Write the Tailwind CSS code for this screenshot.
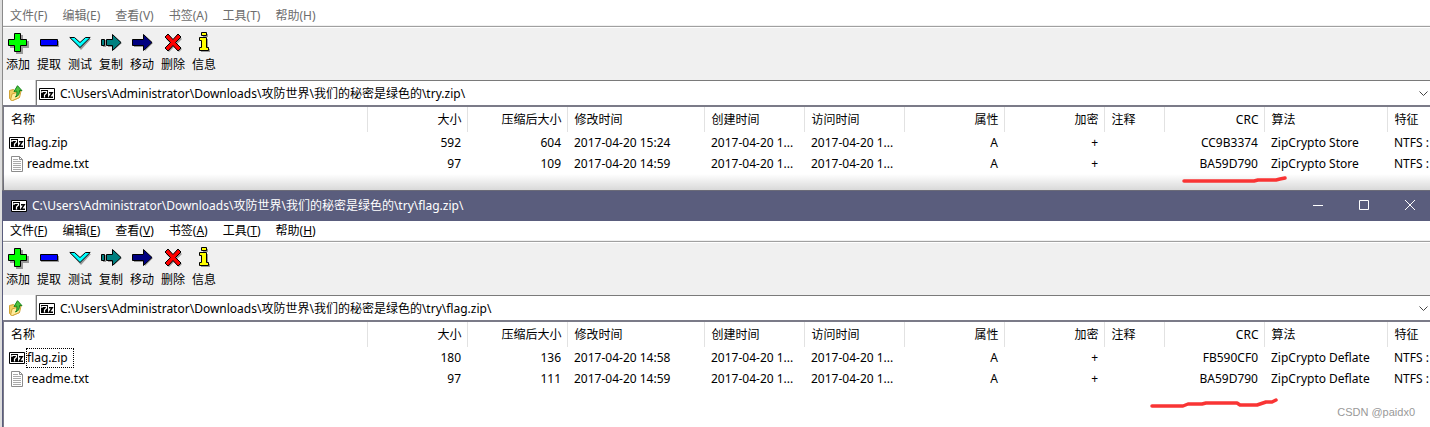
<!DOCTYPE html>
<html lang="zh-CN">
<head>
    <meta charset="UTF-8">
    <meta name="viewport" content="width=device-width, initial-scale=1.0">
    <title>7-Zip</title>
    <script src="https://cdn.jsdelivr.net/npm/@tailwindcss/browser@4"></script>
</head>
<body class="relative min-h-screen overflow-hidden bg-[#dedede] pl-[2px] font-['Noto_Sans','Noto_Sans_CJK_SC',sans-serif] text-[12px] leading-[18px] text-black">
    <!-- Shared icons -->
    <svg class="hidden">
        <symbol id="i-add" viewBox="0 0 22 22"><path fill="#999" d="M9 3h7v6h6v7h-6v6H9v-6H3V9h6z"/><path fill="#0f0" stroke="#000" d="M7.500 1.500h6v6h6v6h-6v6h-6v-6h-6v-6h6z"/></symbol>
        <symbol id="i-extract" viewBox="0 0 22 22"><path fill="#999" d="M3 9h18v6H3z"/><path fill="#00f" stroke="#000" d="M2.500 7.500h17v6h-17z"/></symbol>
        <symbol id="i-test" viewBox="0 0 22 22"><path fill="#999" d="M2 7h5l5 5 5-5h5L12 18z"/><path fill="#0ff" stroke="#000" d="M.800 5.500h4.700L11 10.500l5.500-5h4.700L11 15.500z"/></symbol>
        <symbol id="i-copy" viewBox="0 0 22 22"><path fill="#999" d="M3 8h3v7H3zM8 8h6V4l8 7-8 7v-3H8z"/><path fill="#008080" stroke="#000" d="M1.500 7.500h3v6h-3zM6.500 7.500h6v-5l8.500 8-8.500 8v-5h-6z"/></symbol>
        <symbol id="i-move" viewBox="0 0 22 22"><path fill="#999" d="M3 8h11V4l8 7-8 8v-4H3z"/><path fill="#000080" stroke="#000" d="M1.500 7.500h11v-5l8.500 8-8.500 8v-5h-11z"/></symbol>
        <symbol id="i-delete" viewBox="0 0 22 22"><path fill="#999" d="M7 4l5 5 5-5 3 3-5 5 5 5-3 3-5-5-5 5-3-3 5-5-5-5z"/><path fill="#f00" stroke="#000" d="M6 2l5 5.500L16 2l3 3-5.500 5.500L19 16l-3 3-5-5.500L6 19l-3-3 5.500-5.500L3 5z"/></symbol>
        <symbol id="i-info" viewBox="0 0 22 22"><path fill="#999" d="M10 2h5v3h-5zM8 7h7v10h2v3H8v-3h2v-7H8z"/><path fill="#ff0" stroke="#000" d="M8.500.500h5v3h-5zM6.500 5.500h7v10h2v3h-9v-3h2v-7h-2z"/></symbol>
        <symbol id="i-7z" viewBox="0 0 16 12"><path fill="#fff" stroke="#000" d="M.500.500h15v11H.500z"/><path d="M2 2h7v8H2z"/><path fill="none" stroke="#fff" stroke-width="1.200" d="M3 5V3.500h4.500V5L5.500 7v2.500"/><path fill="none" stroke="#000" stroke-width="1.500" d="M10 4.700h3.200L10.300 9.200H14"/></symbol>
        <symbol id="i-up" viewBox="0 0 16 16"><path fill="#f0cf62" stroke="#d1a437" d="M1.500 5.500l4-1 1 1 5-1v8l-7 3-3-2z"/><path fill="#ffeb9c" stroke="#d1a437" d="M2.500 15l1.500-6 9-3-1.500 6.500-7 3z"/><path fill="#4cc43f" stroke="#16801a" d="M9.500.700l4.500 5-2.500-.200c0 3.500-1 5.500-4 6.500 1.500-2 1.700-3.500 1.200-6L6 6.500z"/></symbol>
        <symbol id="i-txt" viewBox="0 0 12 16"><path fill="#fff" stroke="#8c8c8c" d="M.500.500h8l3 3v12H.500z"/><path fill="none" stroke="#8c8c8c" d="M8.500.500v3h3"/><path stroke="#aaa" d="M2 3.500h5M2 5.500h8M2 7.500h8M2 9.500h8M2 11.500h8M2 13.500h8"/></symbol>
        <symbol id="i-down" viewBox="0 0 9 6"><path fill="none" stroke="#444" d="M.500.500l4 4 4-4"/></symbol>
    </svg>

    <!-- Back window -->
    <section class="relative h-[190px] overflow-hidden border-l border-[#8a8a8a] bg-white pt-[6px]">
        <nav class="flex h-[20px] gap-[15px] border-b border-[#f0f0f0] pl-[7px] text-[#6d6d6d]">
            <button>文件(F)</button><button>编辑(E)</button><button>查看(V)</button><button>书签(A)</button><button>工具(T)</button><button>帮助(H)</button>
        </nav>
        <div class="flex h-[54px] border-t border-[#a0a0a0] bg-[#f0f0f0] pt-[5px] shadow-[inset_0_1px_0_#fff] [&>button]:-ml-px [&>button]:flex [&>button]:w-[32px] [&>button]:flex-col [&>button]:items-center [&>button]:gap-[2px]">
            <button><svg class="size-[22px]"><use href="#i-add"/></svg>添加</button>
            <button><svg class="size-[22px]"><use href="#i-extract"/></svg>提取</button>
            <button><svg class="size-[22px]"><use href="#i-test"/></svg>测试</button>
            <button><svg class="size-[22px]"><use href="#i-copy"/></svg>复制</button>
            <button><svg class="size-[22px]"><use href="#i-move"/></svg>移动</button>
            <button><svg class="size-[22px]"><use href="#i-delete"/></svg>删除</button>
            <button><svg class="size-[22px]"><use href="#i-info"/></svg>信息</button>
        </div>
        <div class="flex h-[27px] border-b-2 border-[#7b7b88]">
            <button class="w-[33px] pl-[5px]" aria-label="上一级"><svg class="size-[16px]"><use href="#i-up"/></svg></button>
            <div class="relative flex min-w-0 flex-1 items-center border-t border-l border-[#7a7a7a] pt-px pl-[2px] shadow-[-1px_0_0_#d0d0d0]">
                <svg class="h-[12px] w-[16px]"><use href="#i-7z"/></svg>
                <select aria-label="路径" class="min-w-0 flex-1 appearance-none pl-[5px] outline-none">
                    <option>C:\Users\Administrator\Downloads\攻防世界\我们的秘密是绿色的\try.zip\</option>
                </select>
                <svg class="pointer-events-none absolute right-[2px] h-[6px] w-[9px]"><use href="#i-down"/></svg>
            </div>
        </div>
        <div class="h-[83px] border-l border-[#7b7b88]">
            <table class="w-full table-fixed text-right whitespace-nowrap [&_td]:overflow-hidden [&_td]:py-0 [&_td]:pr-[6px] [&_td]:pl-[7px] [&_th]:overflow-hidden [&_th]:border-r [&_th]:border-[#e2e2e2] [&_th]:pr-[5px] [&_th]:pl-[7px] [&_th]:font-normal [&_th:last-child]:border-r-0 [&_th:last-child]:pr-0 [&_td:last-child]:pr-0">
                <colgroup><col class="w-[363px]"><col class="w-[100px]"><col class="w-[100px]"><col class="w-[137px]"><col class="w-[100px]"><col class="w-[100px]"><col class="w-[100px]"><col class="w-[100px]"><col class="w-[60px]"><col class="w-[100px]"><col class="w-[123px]"><col></colgroup>
                <thead>
                    <tr class="h-[25px]"><th class="text-left">名称</th><th>大小</th><th>压缩后大小</th><th class="text-left">修改时间</th><th class="text-left">创建时间</th><th class="text-left">访问时间</th><th>属性</th><th>加密</th><th class="text-left">注释</th><th>CRC</th><th class="text-left">算法</th><th class="text-left">特征</th></tr>
                </thead>
                <tbody>
                    <tr class="h-[21px]"><td><div class="-ml-[2px] flex items-center gap-px"><svg class="h-[12px] w-[16px]"><use href="#i-7z"/></svg><span class="border border-transparent pr-[5px]">flag.zip</span></div></td><td>592</td><td>604</td><td class="text-left">2017-04-20 15:24</td><td class="text-left">2017-04-20 1...</td><td class="text-left">2017-04-20 1...</td><td>A</td><td>+</td><td></td><td>CC9B3374</td><td class="text-left">ZipCrypto Store</td><td class="text-left">NTFS :</td></tr>
                    <tr class="h-[21px]"><td><div class="-ml-[2px] flex items-center gap-px"><svg class="h-[16px] w-[16px]"><use href="#i-txt"/></svg><span class="border border-transparent pr-[5px]">readme.txt</span></div></td><td>97</td><td>109</td><td class="text-left">2017-04-20 14:59</td><td class="text-left">2017-04-20 1...</td><td class="text-left">2017-04-20 1...</td><td>A</td><td>+</td><td></td><td>BA59D790</td><td class="text-left">ZipCrypto Store</td><td class="text-left">NTFS :</td></tr>
                </tbody>
            </table>
        </div>
        <!-- Shadow cast by the front window -->
        <div class="absolute inset-x-0 bottom-0 h-[16px] bg-linear-to-b from-black/0 to-black/15"></div>
    </section>

    <!-- Front window -->
    <section class="flex min-h-[237px] flex-col border-l border-[#5a5d7d] bg-white">
        <header class="-ml-px flex h-[31px] items-center border-t border-[#6b6b78] bg-[#5a5d7d] pl-[9px] text-white">
            <svg class="h-[12px] w-[16px]"><use href="#i-7z"/></svg>
            <h1 class="flex-1 pl-[5px]">C:\Users\Administrator\Downloads\攻防世界\我们的秘密是绿色的\try\flag.zip\</h1>
            <div class="-mr-[3px] flex [&>button]:flex [&>button]:h-[30px] [&>button]:w-[46px] [&>button]:items-center [&>button]:justify-center">
                <button aria-label="最小化"><svg class="size-[12px]" viewBox="0 0 12 12"><path stroke="#fff" d="M1 5.500h10"/></svg></button>
                <button aria-label="最大化"><svg class="size-[12px]" viewBox="0 0 12 12"><path fill="none" stroke="#fff" d="M1.500.500h9v9h-9z"/></svg></button>
                <button aria-label="关闭"><svg class="size-[12px]" viewBox="0 0 12 12"><path stroke="#fff" d="M1 0l10 10M11 0L1 10"/></svg></button>
            </div>
        </header>
        <nav class="flex h-[20px] gap-[15px] border-b border-[#f0f0f0] pl-[7px]">
            <button>文件(<u>F</u>)</button><button>编辑(<u>E</u>)</button><button>查看(<u>V</u>)</button><button>书签(<u>A</u>)</button><button>工具(<u>T</u>)</button><button>帮助(<u>H</u>)</button>
        </nav>
        <div class="flex h-[54px] border-t border-[#a0a0a0] bg-[#f0f0f0] pt-[5px] shadow-[inset_0_1px_0_#fff] [&>button]:-ml-px [&>button]:flex [&>button]:w-[32px] [&>button]:flex-col [&>button]:items-center [&>button]:gap-[2px]">
            <button><svg class="size-[22px]"><use href="#i-add"/></svg>添加</button>
            <button><svg class="size-[22px]"><use href="#i-extract"/></svg>提取</button>
            <button><svg class="size-[22px]"><use href="#i-test"/></svg>测试</button>
            <button><svg class="size-[22px]"><use href="#i-copy"/></svg>复制</button>
            <button><svg class="size-[22px]"><use href="#i-move"/></svg>移动</button>
            <button><svg class="size-[22px]"><use href="#i-delete"/></svg>删除</button>
            <button><svg class="size-[22px]"><use href="#i-info"/></svg>信息</button>
        </div>
        <div class="flex h-[27px] border-b-2 border-[#7b7b88]">
            <button class="w-[33px] pl-[5px]" aria-label="上一级"><svg class="size-[16px]"><use href="#i-up"/></svg></button>
            <div class="relative flex min-w-0 flex-1 items-center border-t border-l border-[#7a7a7a] pt-px pl-[2px] shadow-[-1px_0_0_#d0d0d0]">
                <svg class="h-[12px] w-[16px]"><use href="#i-7z"/></svg>
                <select aria-label="路径" class="min-w-0 flex-1 appearance-none pl-[5px] outline-none">
                    <option>C:\Users\Administrator\Downloads\攻防世界\我们的秘密是绿色的\try\flag.zip\</option>
                </select>
                <svg class="pointer-events-none absolute right-[2px] h-[6px] w-[9px]"><use href="#i-down"/></svg>
            </div>
        </div>
        <div class="flex-1 border-l border-[#7b7b88]">
            <table class="w-full table-fixed text-right whitespace-nowrap [&_td]:overflow-hidden [&_td]:py-0 [&_td]:pr-[6px] [&_td]:pl-[7px] [&_th]:overflow-hidden [&_th]:border-r [&_th]:border-[#e2e2e2] [&_th]:pr-[5px] [&_th]:pl-[7px] [&_th]:font-normal [&_th:last-child]:border-r-0 [&_th:last-child]:pr-0 [&_td:last-child]:pr-0">
                <colgroup><col class="w-[363px]"><col class="w-[100px]"><col class="w-[100px]"><col class="w-[137px]"><col class="w-[100px]"><col class="w-[100px]"><col class="w-[100px]"><col class="w-[100px]"><col class="w-[60px]"><col class="w-[100px]"><col class="w-[123px]"><col></colgroup>
                <thead>
                    <tr class="h-[25px]"><th class="text-left">名称</th><th>大小</th><th>压缩后大小</th><th class="text-left">修改时间</th><th class="text-left">创建时间</th><th class="text-left">访问时间</th><th>属性</th><th>加密</th><th class="text-left">注释</th><th>CRC</th><th class="text-left">算法</th><th class="text-left">特征</th></tr>
                </thead>
                <tbody>
                    <tr class="h-[21px]"><td><div class="-ml-[2px] flex items-center gap-px"><svg class="h-[12px] w-[16px]"><use href="#i-7z"/></svg><span class="border border-dotted border-black pr-[5px]">flag.zip</span></div></td><td>180</td><td>136</td><td class="text-left">2017-04-20 14:58</td><td class="text-left">2017-04-20 1...</td><td class="text-left">2017-04-20 1...</td><td>A</td><td>+</td><td></td><td>FB590CF0</td><td class="text-left">ZipCrypto Deflate</td><td class="text-left">NTFS :</td></tr>
                    <tr class="h-[21px]"><td><div class="-ml-[2px] flex items-center gap-px"><svg class="h-[16px] w-[16px]"><use href="#i-txt"/></svg><span class="border border-transparent pr-[5px]">readme.txt</span></div></td><td>97</td><td>111</td><td class="text-left">2017-04-20 14:59</td><td class="text-left">2017-04-20 1...</td><td class="text-left">2017-04-20 1...</td><td>A</td><td>+</td><td></td><td>BA59D790</td><td class="text-left">ZipCrypto Deflate</td><td class="text-left">NTFS :</td></tr>
                </tbody>
            </table>
        </div>
    </section>

    <!-- Pen marks under the CRC values -->
    <svg class="pointer-events-none absolute top-[174px] left-[1180px] h-[12px] w-[112px]" viewBox="0 0 112 12"><path fill="none" stroke="#f93434" stroke-width="3.500" stroke-linecap="round" stroke-linejoin="round" d="M4 7h70l4-1h18l4-1 5-1"/></svg>
    <svg class="pointer-events-none absolute top-[396px] left-[1148px] h-[14px] w-[134px]" viewBox="0 0 134 14"><path fill="none" stroke="#f93434" stroke-width="3.500" stroke-linecap="round" stroke-linejoin="round" d="M4 10h31l5-2h14l4-1h31l3 2h17l9-3h6l4-2"/></svg>
    <p class="absolute right-[15px] bottom-[6px] font-['Liberation_Sans',sans-serif] text-[11px] text-[#999]">CSDN @paidx0</p>
</body>
</html>
